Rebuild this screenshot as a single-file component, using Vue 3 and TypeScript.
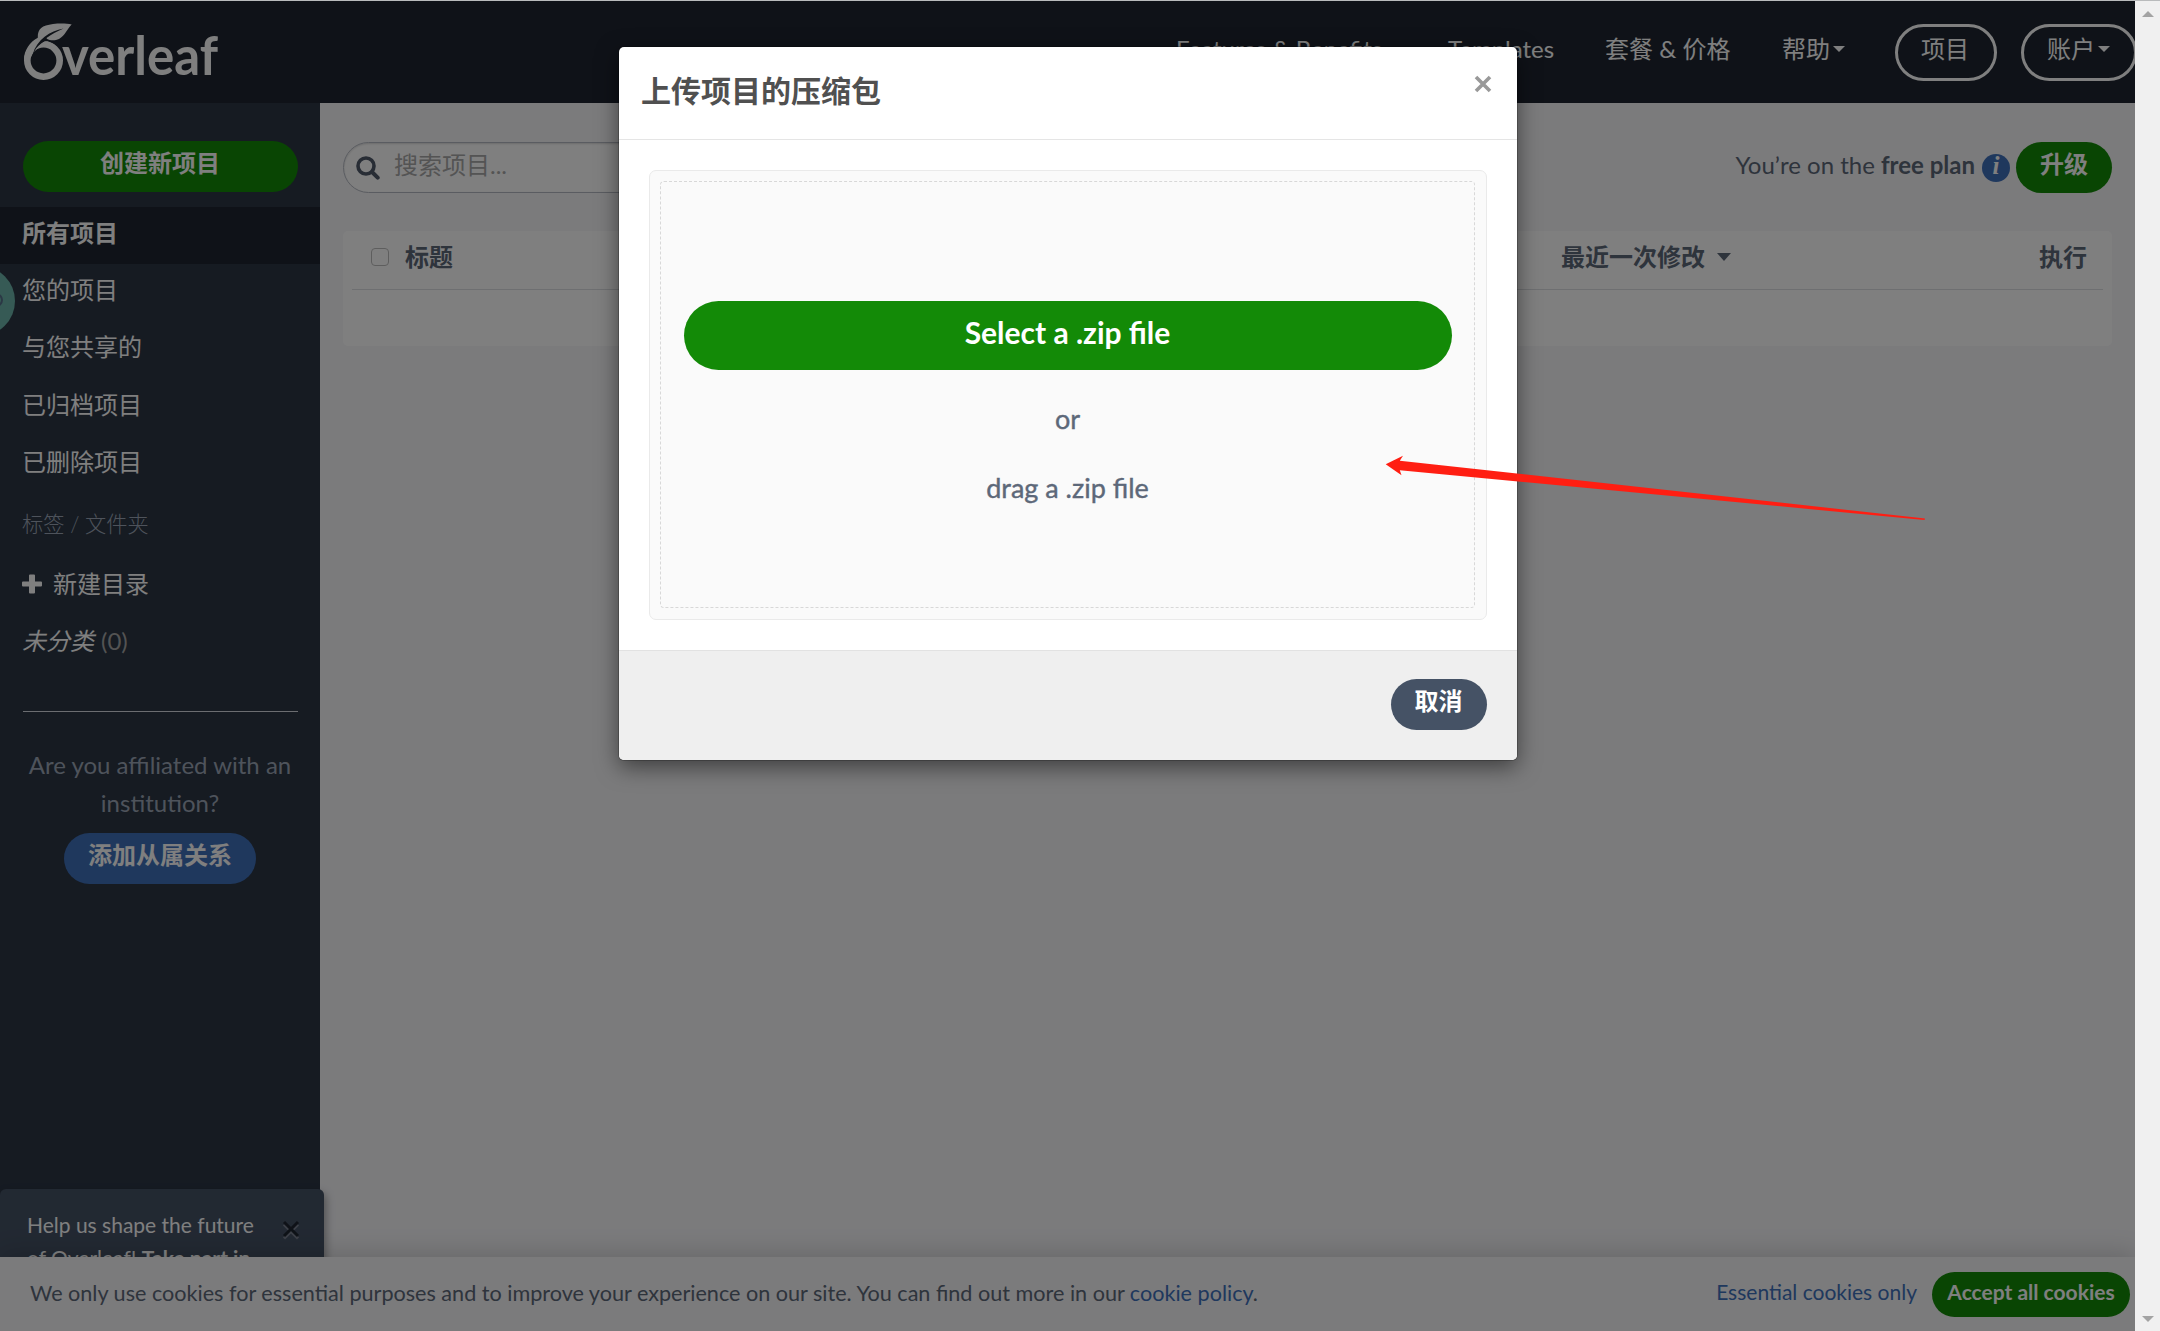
<script setup lang="ts">
interface Filter {
  label: string
  active?: boolean
}

const filters: Filter[] = [
  { label: '所有项目', active: true },
  { label: '您的项目' },
  { label: '与您共享的' },
  { label: '已归档项目' },
  { label: '已删除项目' },
]
</script>

<template>
  <div class="screen">
    <div class="page">
      <header class="navbar">
        <svg class="logo" width="220" height="80" viewBox="0 0 220 80" fill="#fff">
          <ellipse cx="22.500" cy="41.500" rx="16.200" ry="16.200" fill="none" stroke="#fff" stroke-width="6.600" />
          <path d="M3 41C3 31 9 23 16.800 18.800C16.500 9.500 21 6.500 32 5C40 4.200 46 4.500 50.700 5.600C46 10 44 17 38 20C34 21.800 29 21.500 26 20C20 22.500 14 29 10 38Z" />
          <path d="M42.500 9.500C29 12 16 20 11.500 36L14.500 31.500C16.500 28.500 19 26 22.500 23L27 21.800L25.500 19C30 15.500 36 12.500 42.500 9.500Z" fill="#1e2530" />
          <path d="M13 33C15.500 28 19 24.800 24 22.200C30 23 33 25 36 28L30 29C24 26.500 18 27 13 33Z" />
          <text x="41" y="55.700" font-size="53" font-weight="700" textLength="156" lengthAdjust="spacingAndGlyphs">verleaf</text>
        </svg>
        <nav class="nav">
          <a class="n1">Features &amp; Benefits</a>
          <a class="n2">Templates</a>
          <a class="n3">套餐 &amp; 价格</a>
          <a class="n4">帮助<i class="caret"></i></a>
          <a class="pill">项目</a>
          <a class="pill last">账户<i class="caret"></i></a>
        </nav>
      </header>

      <div class="body">
        <aside class="sidebar">
          <button class="btn green create">创建新项目</button>
          <ul class="filters">
            <li v-for="f in filters" :key="f.label" :class="{ active: f.active }">{{ f.label }}</li>
            <li class="heading">标签 / 文件夹</li>
            <li>
              <svg class="plus" width="20" height="20" viewBox="0 0 20 20" fill="#fff">
                <path d="M8 0.500h4a1 1 0 0 1 1 1V7.500h6a1 1 0 0 1 1 1v3a1 1 0 0 1-1 1h-6v6a1 1 0 0 1-1 1h-4a1 1 0 0 1-1-1v-6H1a1 1 0 0 1-1-1v-3a1 1 0 0 1 1-1h6V1.500a1 1 0 0 1 1-1z" />
              </svg>新建目录
            </li>
            <li><em>未分类</em><span class="count">(0)</span></li>
          </ul>
          <hr class="rule" />
          <p class="affil">Are you affiliated with an institution?</p>
          <button class="btn blue">添加从属关系</button>
        </aside>

        <main class="content">
          <div class="toolbar">
            <div class="search">
              <svg width="24" height="24" viewBox="0 0 24 24" fill="none" stroke="#505a6b">
                <circle cx="10" cy="10" r="8" stroke-width="3.600" />
                <path d="M16 16l5.700 5.700" stroke-width="4" stroke-linecap="round" />
              </svg>
              <span>搜索项目...</span>
            </div>
            <div class="plan">
              <span>You’re on the <b>free plan</b></span>
              <span class="info">i</span>
              <button class="btn green upgrade">升级</button>
            </div>
          </div>
          <section class="table">
            <div class="thead">
              <span class="check"></span>
              <b class="c-title">标题</b>
              <b class="c-date">最近一次修改<i class="sort"></i></b>
              <b class="c-act">执行</b>
            </div>
          </section>
        </main>
      </div>

      <div class="bubble"><span></span></div>

      <div class="notice">
        <p>Help us shape the future of Overleaf! <b>Take part in</b></p>
        <svg width="18" height="20" viewBox="0 0 18 20" fill="none" stroke-width="3">
          <path d="M2 4.500l14 14M16 4.500l-14 14" stroke="#7a8190" />
          <path d="M2 2l14 14M16 2l-14 14" stroke="#1e2530" />
        </svg>
      </div>

      <div class="cookies">
        <span class="cookie-text">We only use cookies for essential purposes and to improve your experience on our site. You can find out more in our <a>cookie policy</a>.</span>
        <a class="essential">Essential cookies only</a>
        <button class="btn green accept">Accept all cookies</button>
      </div>
    </div>

    <div class="backdrop"></div>

    <div class="modal">
      <div class="m-head">
        <h3>上传项目的压缩包</h3>
        <svg width="18" height="18" viewBox="0 0 18 18" stroke="#999" stroke-width="3.600">
          <path d="M2 2l14 14M16 2l-14 14" />
        </svg>
      </div>
      <div class="m-body">
        <div class="drop">
          <div class="inner">
            <button class="btn select">Select a .zip file</button>
            <span>or</span>
            <span>drag a .zip file</span>
          </div>
        </div>
      </div>
      <div class="m-foot"><button class="btn cancel">取消</button></div>
    </div>

    <div class="scrollbar">
      <svg width="12" height="6" viewBox="0 0 12 6" fill="#a3a3a3"><path d="M0 6L6 0l6 6z" /></svg>
      <svg width="12" height="6" viewBox="0 0 12 6" fill="#a3a3a3"><path d="M0 0L6 6l6-6z" /></svg>
    </div>
    <div class="topline"></div>

    <svg class="arrow" width="542" height="66" viewBox="0 0 542 66" fill="#ff1e12">
      <path d="M0.700 9.300L18 0.700L14.800 5.700L540 63.500L539.500 65L14.800 15.300L16.500 20.300Z" />
    </svg>
  </div>
</template>

<style>
body {
  margin: 0;
  overflow: hidden;
}
</style>

<style scoped>
.screen {
  position: relative;
  width: 2160px;
  height: 1331px;
  overflow: hidden;
  font: 400 24px/38px Lato, 'Noto Sans CJK SC', sans-serif;
  color: #5d6879;
}
.screen * {
  box-sizing: border-box;
}
.page {
  position: relative;
  display: flex;
  flex-direction: column;
  width: 2135px;
  height: 1331px;
  overflow: hidden;
  background: #f6f6f9;
}
.navbar {
  display: flex;
  justify-content: space-between;
  flex: none;
  height: 103px;
  padding-left: 21px;
  background: #1e2530;
}
.logo {
  flex: none;
  margin-top: 19px;
  font-family: Lato, sans-serif;
}
.nav {
  display: flex;
  align-items: flex-start;
  width: 959px;
  flex: none;
  padding-top: 24px;
  color: #fff;
  white-space: nowrap;
}
.nav a {
  display: flex;
  align-items: center;
  flex: none;
  height: 50px;
}
.n1 {
  width: 272px;
}
.n2 {
  width: 157px;
}
.n3 {
  width: 177px;
}
.n4 {
  width: 113px;
}
.caret {
  margin-left: 3px;
  border: 6px solid transparent;
  border-top-color: #fff;
  border-bottom: 0;
}
.nav .pill {
  width: 102px;
  height: 57px;
  margin-right: 24px;
  padding: 0 0 7px 23px;
  border: 3px solid #fff;
  border-radius: 29px;
}
.nav .last {
  width: 116px;
  margin-right: 0;
}
.body {
  display: flex;
  flex: 1;
}
.sidebar {
  display: flex;
  flex-direction: column;
  align-items: center;
  width: 320px;
  flex: none;
  padding-top: 38px;
  background: #2c3645;
  color: #fff;
}
.btn {
  display: block;
  flex: none;
  height: 51px;
  margin: 0;
  padding: 0 24px 7px;
  border: 0;
  border-radius: 26px;
  color: #fff;
  font: 700 24px/44px Lato, 'Noto Sans CJK SC', sans-serif;
  white-space: nowrap;
}
.green {
  background: #138a07;
}
.blue {
  width: 192px;
  background: #3e70bb;
}
.create {
  width: 275px;
}
.filters {
  width: 320px;
  margin: 15px 0 0;
  padding: 0;
  list-style: none;
}
.filters li {
  display: flex;
  align-items: center;
  height: 57.3px;
  padding: 0 22px 6px;
}
.filters .active {
  background: #1e2530;
  font-weight: 700;
}
.filters .heading {
  height: 65px;
  padding-bottom: 4px;
  color: #9da7b7;
  font-size: 21.2px;
  font-weight: 300;
}
.plus {
  margin-right: 11px;
}
.filters em {
  font-style: italic;
}
.count {
  margin-left: 7px;
  color: #a6a6a6;
}
.rule {
  width: 275px;
  height: 1px;
  margin: 38px 0 0;
  border: 0;
  background: #d6dae3;
}
.affil {
  width: 275px;
  margin: 34px 0 11px;
  color: #9da7b7;
  text-align: center;
}
.content {
  flex: 1;
  padding: 39px 23px 0;
}
.toolbar {
  display: flex;
  justify-content: space-between;
  height: 51px;
}
.search {
  display: flex;
  align-items: center;
  width: 900px;
  height: 51px;
  padding-left: 12px;
  border: 1px solid #b5b9c2;
  border-radius: 26px;
  background: #fff;
  box-shadow: inset 0 1px 2px rgba(0, 0, 0, 0.15);
  color: #a8a8a8;
}
.search span {
  margin: -5px 0 0 14px;
}
.search svg {
  margin-top: 1px;
}
.plan {
  display: flex;
  align-items: center;
}
.plan > span:first-child {
  margin-top: -5px;
}
.info {
  width: 28px;
  height: 28px;
  margin: 1px 6px 0 7px;
  border-radius: 50%;
  background: #3e70bb;
  color: #fff;
  font: italic 700 25px/24px 'Liberation Serif', serif;
  text-align: center;
}
.upgrade {
  width: 96px;
}
.table {
  height: 115px;
  margin-top: 38px;
  padding: 0 9px;
  border-radius: 5px;
  background: #fff;
}
.thead {
  display: flex;
  align-items: center;
  height: 59px;
  padding: 0 16px 7px 19px;
  border-bottom: 1px solid #dcdee2;
}
.check {
  width: 18px;
  height: 18px;
  border: 1px solid #bdbdbd;
  border-radius: 4px;
}
.c-title {
  width: 1156px;
  margin-left: 16px;
}
.c-date {
  display: flex;
  align-items: center;
  flex: 1;
}
.sort {
  margin-left: 12px;
  border: 7px solid transparent;
  border-top: 8px solid #5d6879;
  border-bottom: 0;
}
.bubble {
  position: absolute;
  left: -55px;
  top: 266px;
  width: 70px;
  height: 70px;
  border-radius: 50%;
  background: #6cb5aa;
}
.bubble span {
  position: absolute;
  right: 12px;
  top: 27px;
  width: 14px;
  height: 14px;
  border: 2px solid #56708a;
  border-radius: 50%;
}
.notice {
  position: absolute;
  left: 0;
  top: 1189px;
  display: flex;
  align-items: flex-start;
  width: 324px;
  height: 110px;
  padding: 19px 0 0 27px;
  border-radius: 6px;
  background: #455265;
  box-shadow: 2px 4px 8px rgba(0, 0, 0, 0.35);
  color: #fff;
  font-size: 21px;
  line-height: 33px;
}
.notice p {
  width: 240px;
  margin: 0 15px 0 0;
}
.notice svg {
  margin-top: 12px;
}
.cookies {
  position: absolute;
  left: 0;
  bottom: 0;
  display: flex;
  align-items: center;
  width: 2135px;
  height: 74px;
  padding: 0 5px 0 30px;
  background: #f6f6f8;
  box-shadow: 0 -5px 24px rgba(0, 0, 0, 0.15);
  font-size: 21px;
  white-space: nowrap;
}
.cookie-text {
  flex: 1;
  margin-top: -2px;
  font-size: 21.6px;
}
.cookies a {
  color: #3e70bb;
}
.essential {
  margin: -4px 15px 0 0;
}
.accept {
  width: 198px;
  height: 45px;
  padding: 0 0 5px;
  font-size: 21px;
  line-height: 40px;
}
.backdrop {
  position: absolute;
  inset: 0 25px 0 0;
  background: rgba(0, 0, 0, 0.5);
}
.modal {
  position: absolute;
  left: 619px;
  top: 47px;
  width: 898px;
  height: 713px;
  overflow: visible;
  border-radius: 5px;
  background: #fff;
  box-shadow: 0 0 0 1px rgba(0, 0, 0, 0.2), 0 7px 22px rgba(0, 0, 0, 0.5);
}
.m-head {
  display: flex;
  justify-content: space-between;
  height: 93px;
  padding: 24px 25px 0 22px;
  border-bottom: 1px solid #e5e5e5;
}
.m-head h3 {
  margin: 0;
  color: #505050;
  font-size: 30px;
  line-height: 38px;
}
.m-head svg {
  margin-top: 4px;
}
.m-body {
  height: 510px;
  padding: 30px;
}
.drop {
  height: 450px;
  padding: 10px 11px 11px 10px;
  border: 1px solid #eaeaea;
  border-radius: 7px;
  background: #fafafa;
}
.inner {
  display: flex;
  flex-direction: column;
  align-items: center;
  height: 427px;
  padding: 119px 22px 0;
  border: 1px dashed #d8d8d8;
  border-radius: 4px;
  font-size: 27px;
  line-height: 42px;
}
.inner .select {
  width: 768px;
  height: 69px;
  padding-bottom: 7px;
  border-radius: 35px;
  background: #138a07;
  font-size: 30px;
  line-height: 62px;
}
.inner span {
  margin-top: 28px;
  -webkit-text-stroke: 0.4px #5d6879;
}
.inner span + span {
  margin-top: 27px;
}
.m-foot {
  display: flex;
  justify-content: flex-end;
  height: 110px;
  padding: 28px 30px 0;
  border-top: 1px solid #e2e2e2;
  border-radius: 0 0 5px 5px;
  background: #efefef;
}
.cancel {
  width: 96px;
  padding: 0 1px 7px 0;
  background: #455265;
}
.scrollbar {
  position: absolute;
  top: 0;
  right: 0;
  display: flex;
  flex-direction: column;
  align-items: center;
  justify-content: space-between;
  width: 25px;
  height: 1331px;
  padding: 11px 0 9px;
  background: #f0f0f0;
}
.topline {
  position: absolute;
  top: 0;
  left: 0;
  width: 2160px;
  height: 1px;
  background: #b9bbbc;
}
.arrow {
  position: absolute;
  left: 1385px;
  top: 455px;
}
</style>
